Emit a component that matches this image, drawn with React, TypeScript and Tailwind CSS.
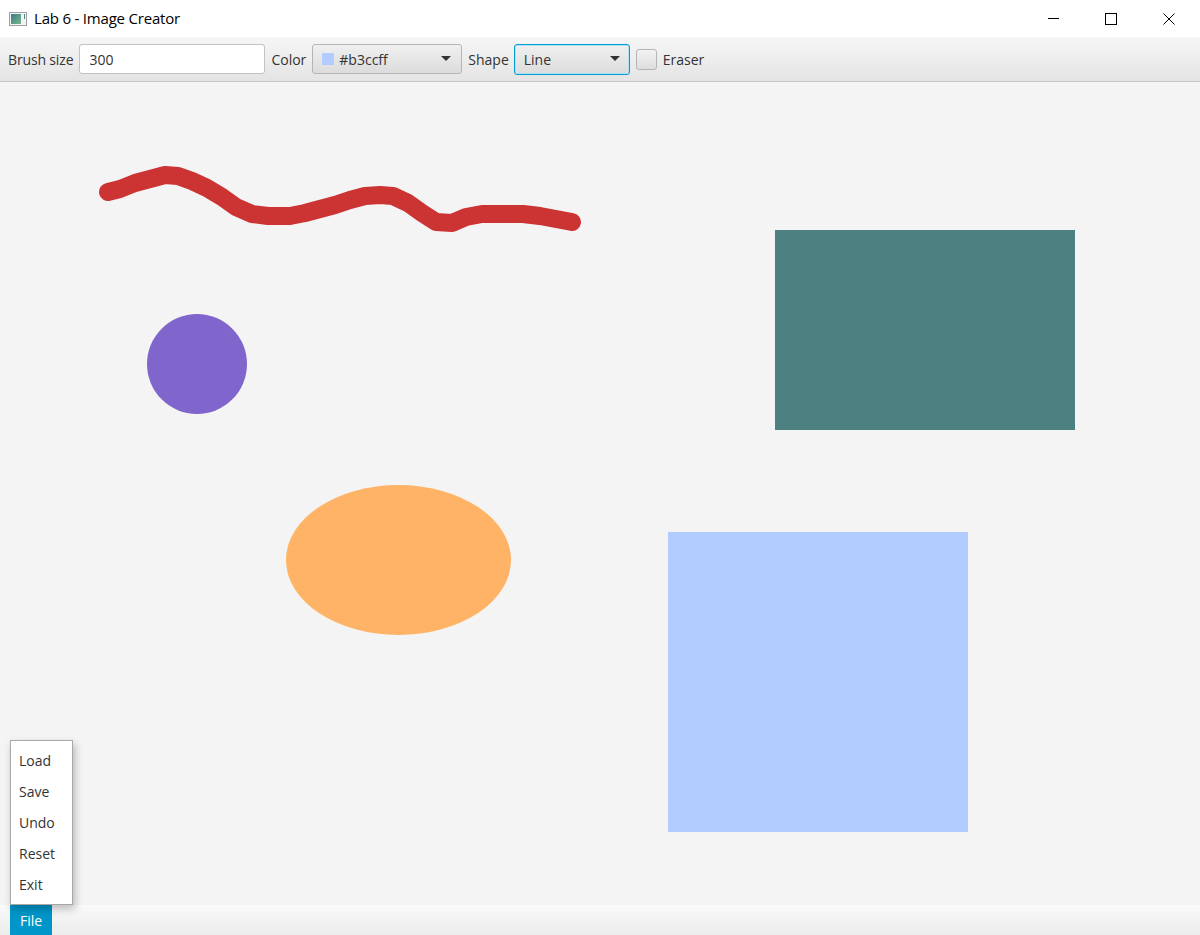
const strokePoints: [number, number][] = [
  [108, 192],
  [120, 189],
  [135, 183],
  [150, 179],
  [165, 175],
  [178, 176],
  [192, 181],
  [207, 188],
  [222, 197],
  [236, 207],
  [252, 214],
  [268, 216],
  [290, 216],
  [305, 213],
  [320, 209],
  [335, 205],
  [350, 200],
  [365, 196],
  [380, 195],
  [393, 196],
  [408, 203],
  [422, 213],
  [436, 222],
  [452, 223],
  [466, 217],
  [482, 214],
  [500, 214],
  [523, 214],
  [540, 216],
  [556, 219],
  [572, 222],
];

const menuItems = ["Load", "Save", "Undo", "Reset", "Exit"];

const ChevronDown = () => (
  <svg width="10" height="6" viewBox="0 0 10 6">
    <path d="M0 0 L10 0 L5 5 Z" fill="#333" />
  </svg>
);

const App = () => {
  return (
    <div
      className="flex flex-col w-[1200px] h-[935px] overflow-hidden bg-[#f4f4f4] text-[#333] relative"
      style={{ fontFamily: '"Open Sans", "Noto Sans", sans-serif' }}
    >
      {/* title bar */}
      <div className="flex items-center h-[37px] bg-white shrink-0">
        <div className="ml-[9px] w-[18px] h-[14px] border border-[#a0a0a0] bg-[#f4f4f4] flex items-center px-[1px] gap-[1px]">
          <div className="w-[10px] h-[10px] bg-gradient-to-br from-[#3c7a8a] to-[#7bb888]" />
          <div className="w-[1px] h-[5px] bg-[#4a8a8a] self-start mt-[1px] ml-[2px]" />
        </div>
        <span className="ml-[7px] text-[15px] text-black tracking-[-0.2px]">
          Lab 6 - Image Creator
        </span>
        <div className="ml-auto flex h-full mr-[8px]">
          <div className="w-[46px] h-full flex items-center justify-center">
            <div className="w-[11px] h-[1px] bg-black" />
          </div>
          <div className="w-[46px] h-full flex items-center justify-center ml-[12px]">
            <div className="w-[12px] h-[12px] border border-black" />
          </div>
          <div className="w-[46px] h-full flex items-center justify-center ml-[12px]">
            <svg width="12" height="12" viewBox="0 0 12 12">
              <path d="M0.5 0.5 L11.5 11.5 M11.5 0.5 L0.5 11.5" stroke="#000" strokeWidth="1" />
            </svg>
          </div>
        </div>
      </div>

      {/* toolbar */}
      <div className="flex items-center h-[45px] shrink-0 bg-gradient-to-b from-[#f6f6f6] to-[#e4e4e4] border-b border-[#c8c8c8] px-[8px] text-[14px]">
        <span className="tracking-[-0.15px]">Brush size</span>
        <div className="ml-[6px] w-[186px] h-[30px] bg-white border border-[#c2c2c2] rounded-[3px] flex items-center pl-[9px]">
          300
        </div>
        <span className="ml-[6px]">Color</span>
        <div className="ml-[6px] w-[150px] h-[30px] border border-[#b5b5b5] rounded-[3px] bg-gradient-to-b from-[#f0f0f0] to-[#dcdcdc] flex items-center pl-[9px] pr-[10px]">
          <div className="w-[12px] h-[12px] bg-[#b3ccff]" />
          <span className="ml-[5px]">#b3ccff</span>
          <div className="ml-auto flex">
            <ChevronDown />
          </div>
        </div>
        <span className="ml-[6px]">Shape</span>
        <div className="ml-[5px] w-[116px] h-[31px] border border-[#039ed3] rounded-[3px] bg-gradient-to-b from-[#f0f0f0] to-[#dcdcdc] flex items-center pl-[9px] pr-[9px] shadow-[inset_0_0_0_1px_#b0dff0]">
          <span>Line</span>
          <div className="ml-auto flex">
            <ChevronDown />
          </div>
        </div>
        <div className="ml-[6px] w-[21px] h-[21px] border border-[#b5b5b5] rounded-[3px] bg-gradient-to-b from-[#f2f2f2] to-[#dedede]" />
        <span className="ml-[6px]">Eraser</span>
      </div>

      {/* canvas */}
      <div className="flex-1 relative">
        <svg
          width="1200"
          height="823"
          viewBox="0 82 1200 823"
          className="absolute inset-0"
        >
          <polyline
            points={strokePoints.map((p) => p.join(",")).join(" ")}
            fill="none"
            stroke="#cc3333"
            strokeWidth="18"
            strokeLinecap="round"
            strokeLinejoin="round"
          />
          <rect x="775" y="230" width="300" height="200" fill="#4d8080" />
          <circle cx="197" cy="364" r="50" fill="#8066cc" />
          <ellipse cx="398.5" cy="560" rx="112.5" ry="75" fill="#ffb366" />
          <rect x="668" y="532" width="300" height="300" fill="#b3ccff" />
        </svg>
      </div>

      {/* bottom bar */}
      <div className="h-[30px] shrink-0 bg-gradient-to-b from-[#fafafa] to-[#ececec] flex items-stretch pl-[10px]">
        <div className="w-[42px] bg-[#0096c9] text-white text-[14px] flex items-center justify-center">
          File
        </div>
      </div>

      {/* file menu */}
      <div className="absolute left-[10px] top-[740px] w-[63px] h-[165px] bg-white border border-[#a8a8a8] shadow-[2px_4px_8px_rgba(0,0,0,0.25)] flex flex-col pt-[4px] text-[14px]">
        {menuItems.map((item) => (
          <div key={item} className="h-[31px] flex items-center pl-[8px]">
            {item}
          </div>
        ))}
      </div>
    </div>
  );
};

export default App;
